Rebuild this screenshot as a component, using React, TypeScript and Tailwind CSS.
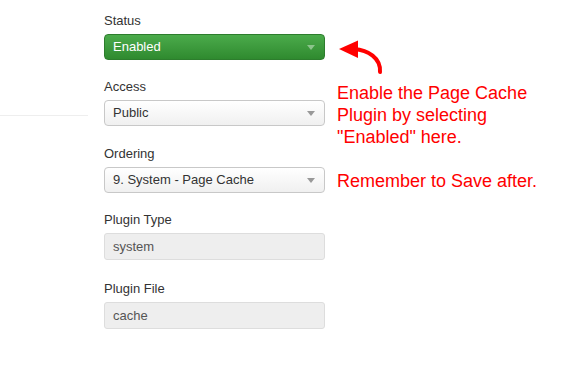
import type { ReactNode } from 'react'

function Caret({ light }: { light?: boolean }) {
  return (
    <svg width="8" height="5" viewBox="0 0 8 5" className="shrink-0">
      <path d="M0 0 L8 0 L4 5 Z" fill={light ? '#8cc48c' : '#999'} />
    </svg>
  )
}

function Field({ label, gap = 'mb-[18px]', children }: { label: string; gap?: string; children: ReactNode }) {
  return (
    <div className={gap}>
      <div className="mb-[4px] text-[13px] leading-[18px] text-[#333]">{label}</div>
      {children}
    </div>
  )
}

function SelectBox({ value }: { value: string }) {
  return (
    <div className="flex h-[26px] items-center justify-between rounded-[4px] border border-[#c8c8c8] bg-gradient-to-b from-white to-[#f0f0f0] pl-[8px] pr-[9px] text-[13px] text-[#333]">
      <span>{value}</span>
      <Caret />
    </div>
  )
}

function ReadOnlyBox({ value }: { value: string }) {
  return (
    <div className="flex h-[27px] items-center rounded-[3px] border border-[#ddd] bg-[#eee] px-[8px] text-[13px] text-[#555]">
      {value}
    </div>
  )
}

export default function App() {
  return (
    <div
      className="flex h-[385px] w-[571px] bg-white"
      style={{ fontFamily: '"Liberation Sans", Arial, sans-serif' }}
    >
      <div className="w-[88px] shrink-0">
        <div className="mt-[115px] border-t border-[#eee]" />
      </div>

      <div className="ml-[16px] w-[221px] shrink-0 pt-[12px]">
        <Field label="Status">
          <div className="flex h-[26px] items-center justify-between rounded-[4px] border border-[#2d7d2d] bg-gradient-to-b from-[#4bab4b] to-[#2f8a2f] pl-[8px] pr-[9px] text-[13px] text-white">
            <span>Enabled</span>
            <Caret light />
          </div>
        </Field>
        <Field label="Access" gap="mb-[19px]">
          <SelectBox value="Public" />
        </Field>
        <Field label="Ordering">
          <SelectBox value="9. System - Page Cache" />
        </Field>
        <Field label="Plugin Type" gap="mb-[20px]">
          <ReadOnlyBox value="system" />
        </Field>
        <Field label="Plugin File">
          <ReadOnlyBox value="cache" />
        </Field>
      </div>

      <div className="ml-[12px] pt-[39px] text-[18px] leading-[22px] text-[#ff0000]">
        <svg width="48" height="36" viewBox="0 0 48 36" className="block">
          <path d="M17 10 C31 11 44 19 43 33" fill="none" stroke="#ff0000" strokeWidth="4" strokeLinecap="round" />
          <path d="M2 10 L21 1.5 L21 19 Z" fill="#ff0000" />
        </svg>
        <p className="mt-[7px]">
          Enable the Page Cache
          <br />
          Plugin by selecting
          <br />
          "Enabled" here.
        </p>
        <p className="mt-[22px]">Remember to Save after.</p>
      </div>
    </div>
  )
}
